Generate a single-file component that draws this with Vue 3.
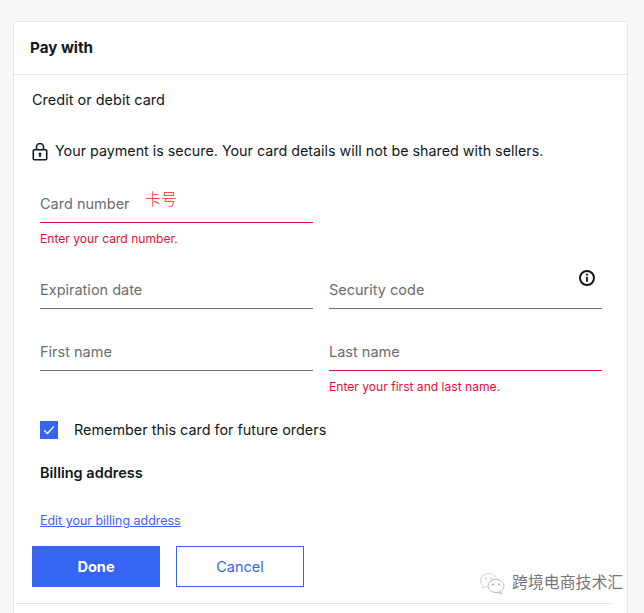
<script setup>
const rows = [
  [
    { label: 'Card number', error: 'Enter your card number.' },
    null
  ],
  [
    { label: 'Expiration date' },
    { label: 'Security code', info: true }
  ],
  [
    { label: 'First name' },
    { label: 'Last name', error: 'Enter your first and last name.' }
  ]
]
</script>

<template>
  <div class="page">
    <section class="card">
      <h2 class="card-title">Pay with</h2>
      <div class="card-body">
        <p class="method">Credit or debit card</p>
        <div class="secure">
          <svg class="lock" width="16" height="18" viewBox="0 0 16 18">
            <path d="M4.5 7V4a3.5 3.5 0 0 1 7 0V7" fill="none" stroke="#111820" stroke-width="1.6" />
            <rect x="1.3" y="6.8" width="13.4" height="10" rx="1" fill="none" stroke="#111820" stroke-width="1.6" />
            <circle cx="8" cy="11" r="1.5" fill="#111820" />
            <rect x="7.2" y="11" width="1.6" height="3.2" fill="#111820" />
          </svg>
          <span>Your payment is secure. Your card details will not be shared with sellers.</span>
        </div>

        <div class="fields">
          <div v-for="(row, i) in rows" :key="i" class="field-row" :class="'row-' + i">
            <div v-for="(field, j) in row" :key="j" class="field">
              <template v-if="field">
                <div class="input" :class="{ invalid: field.error }">
                  <span>{{ field.label }}</span>
                  <svg v-if="field.info" class="info" width="18" height="18" viewBox="0 0 18 18">
                    <circle cx="9" cy="9" r="7" fill="none" stroke="#111820" stroke-width="2" />
                    <circle cx="9" cy="5.6" r="1.1" fill="#111820" />
                    <rect x="8.1" y="7.8" width="1.8" height="5" fill="#111820" />
                  </svg>
                </div>
                <p v-if="field.error" class="error">{{ field.error }}</p>
              </template>
            </div>
          </div>
        </div>

        <label class="remember">
          <span class="checkbox">
            <svg width="12" height="10" viewBox="0 0 12 10">
              <path d="M1.2 5.2l3.3 3.2 6.3-7" fill="none" stroke="#fff" stroke-width="1.4" />
            </svg>
          </span>
          <span>Remember this card for future orders</span>
        </label>

        <h3 class="billing">Billing address</h3>
        <a class="edit" href="#">Edit your billing address</a>

        <div class="actions">
          <button class="btn primary" type="button">Done</button>
          <button class="btn secondary" type="button">Cancel</button>
        </div>
        <div class="rule"></div>
      </div>
    </section>

    <span class="note">卡号</span>
    <div class="watermark">
      <svg width="28" height="24" viewBox="0 0 28 24">
        <path d="M11 2.5C6.5 2.5 2.5 5.5 2.5 9.5c0 2.2 1.2 4 3 5.2l-.7 2.3 2.6-1.4c1 .3 1.8.4 2.8.4" fill="none" stroke="#ccc" stroke-width="1" />
        <path d="M11 2.5c3.8 0 7 2 7.8 5" fill="none" stroke="#ddd" stroke-width="1" />
        <ellipse cx="18" cy="15" rx="8" ry="6.6" fill="#fff" stroke="#bbb" stroke-width="1" />
        <path d="M22 20.5l1.6 2.4-3.6-1.6" fill="#fff" stroke="#bbb" stroke-width="1" />
        <circle cx="15" cy="13.5" r="1" fill="#aaa" />
        <circle cx="21" cy="13.5" r="1" fill="#aaa" />
        <circle cx="8" cy="7.5" r="1" fill="#ccc" />
        <circle cx="13" cy="7.5" r="1" fill="#ccc" />
      </svg>
      <span>跨境电商技术汇</span>
    </div>
  </div>
</template>

<style>
html, body {
  margin: 0;
  background: #f7f7f7;
}
</style>

<style scoped>
.page {
  position: relative;
  width: 644px;
  height: 613px;
  overflow: hidden;
  padding: 21px 0 0 13px;
  box-sizing: border-box;
  font-family: Inter, "Noto Sans CJK SC", sans-serif;
  color: #111820;
}

.card {
  width: 615px;
  height: 620px;
  box-sizing: border-box;
  background: #fff;
  border: 1px solid #e5e5e5;
  border-radius: 3px 3px 0 0;
}

.card-title {
  margin: 0;
  height: 52px;
  padding-left: 16px;
  font-size: 15.2px;
  font-weight: 700;
  line-height: 51px;
  border-bottom: 1px solid #e5e5e5;
}

.card-body {
  padding: 0 25px 0 18px;
}

.method {
  margin: 0;
  padding-top: 15px;
  font-size: 14.5px;
  line-height: 20px;
}

.secure {
  display: flex;
  align-items: center;
  gap: 7px;
  margin-top: 31px;
  font-size: 14.3px;
  line-height: 20px;
  white-space: nowrap;
}

.lock {
  flex: none;
  margin-top: 2px;
}

.fields {
  margin-top: 17px;
  padding-left: 8px;
}

.field-row {
  display: grid;
  grid-template-columns: 273px 273px;
  gap: 16px;
}

.row-1 {
  margin-top: 14px;
}

.row-2 {
  margin-top: 17px;
}

.input {
  position: relative;
  height: 45px;
  box-sizing: border-box;
  display: flex;
  align-items: flex-end;
  padding-bottom: 9px;
  font-size: 14.5px;
  line-height: 18px;
  color: #6a6d70;
  border-bottom: 1px solid #707070;
}

.input.invalid {
  border-bottom-color: #e0103a;
}

.info {
  position: absolute;
  right: 6px;
  top: 5px;
}

.error {
  margin: 9px 0 0;
  font-size: 12.1px;
  line-height: 14px;
  color: #e0103a;
}

.row-0 .field .error {
  margin-bottom: 4px;
}

.remember {
  display: flex;
  align-items: center;
  gap: 16px;
  margin: 27px 0 0 8px;
  font-size: 14.4px;
  line-height: 18px;
}

.checkbox {
  width: 18px;
  height: 18px;
  background: #3665f3;
  display: flex;
  align-items: center;
  justify-content: center;
}

.billing {
  margin: 24px 0 0 8px;
  font-size: 14.5px;
  font-weight: 600;
  line-height: 20px;
}

.edit {
  display: block;
  margin: 30px 0 0 8px;
  font-size: 12.45px;
  line-height: 16px;
  color: #3665f3;
}

.actions {
  display: flex;
  gap: 16px;
  margin-top: 17px;
}

.btn {
  width: 128px;
  height: 41px;
  padding: 0 0 1px;
  border-radius: 0;
  font-family: inherit;
  font-size: 14.5px;
  cursor: pointer;
}

.primary {
  background: #3665f3;
  border: 1px solid #3665f3;
  color: #fff;
  font-weight: 700;
}

.secondary {
  background: #fff;
  border: 1px solid #3665f3;
  color: #3665f3;
}

.rule {
  margin: 16px -9px 0 -16px;
  border-top: 1px solid #e5e5e5;
}

.note {
  position: absolute;
  left: 145px;
  top: 190px;
  font-size: 16px;
  line-height: 18px;
  color: #ee2a2a;
  font-weight: 300;
}

.watermark {
  position: absolute;
  left: 478px;
  top: 571px;
  display: flex;
  align-items: center;
  gap: 6px;
  font-size: 15.9px;
  line-height: 24px;
  color: #777;
  background: #fff;
}
</style>
